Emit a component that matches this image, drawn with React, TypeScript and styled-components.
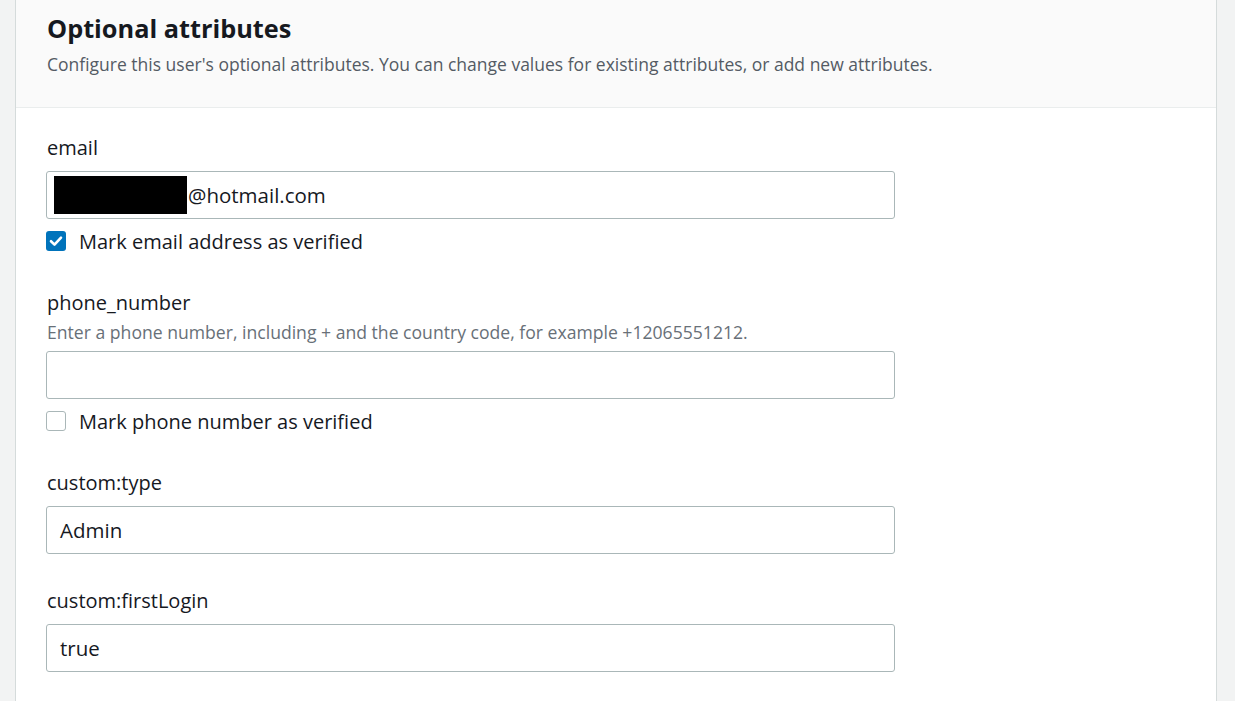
import React from "react";
import styled, { createGlobalStyle } from "styled-components";

const Global = createGlobalStyle`
  html, body { margin: 0; padding: 0; background: #f2f3f3; }
  body { font-family: "Open Sans", "Noto Sans", Arial, sans-serif; color: #16191f; }
`;

const Page = styled.div`
  height: 701px;
  overflow: hidden;
  padding-left: 15px;
  padding-right: 18px;
  background: #f2f3f3;
`;

const Container = styled.section`
  background: #ffffff;
  border-left: 1px solid #d5dbdb;
  border-right: 1px solid #d5dbdb;
  min-height: 701px;
`;

const Header = styled.header`
  background: #fafafa;
  border-bottom: 1px solid #eaeded;
  padding: 10px 31px 32px;
`;

const Title = styled.h2`
  margin: 0;
  font-size: 25.3px;
  line-height: 36px;
  font-weight: 700;
  color: #16191f;
`;

const Description = styled.p`
  margin: 7px 0 0;
  font-size: 17.5px;
  line-height: 22px;
  color: #545b64;
`;

const Body = styled.div`
  padding: 27px 30px 0;
  display: flex;
  flex-direction: column;
  gap: 34px;
`;

const Field = styled.div`
  display: flex;
  flex-direction: column;
  width: 849px;
`;

const Label = styled.label`
  padding-left: 1px;
  font-size: 20px;
  line-height: 26px;
  color: #16191f;
`;

const Hint = styled.div`
  padding-left: 1px;
  font-size: 17.6px;
  line-height: 22px;
  color: #687078;
  margin-top: 5px;
`;

const Input = styled.div<{ $gap: number }>`
  margin-top: ${(p) => p.$gap}px;
  height: 48px;
  box-sizing: border-box;
  border: 1px solid #aab7b8;
  border-radius: 3px;
  background: #fff;
  padding: 0 13px;
  display: flex;
  align-items: center;
  font-size: 20.5px;
  color: #16191f;
`;

const Redaction = styled.span`
  display: inline-block;
  width: 133px;
  height: 38px;
  background: #000;
  margin-left: -6px;
  margin-right: 1px;
`;

const CheckRow = styled.label`
  margin-top: 7px;
  height: 30px;
  display: flex;
  align-items: center;
  gap: 13px;
  font-size: 20px;
  color: #16191f;
`;

const Box = styled.span<{ $checked: boolean }>`
  width: 20px;
  height: 20px;
  box-sizing: border-box;
  border-radius: 3px;
  border: ${(p) => (p.$checked ? "none" : "1.5px solid #aab7b8")};
  background: ${(p) => (p.$checked ? "#0073bb" : "#fff")};
  display: flex;
  align-items: center;
  justify-content: center;
  flex: none;
`;

const Check = ({ checked }: { checked: boolean }) => (
  <Box $checked={checked}>
    {checked && (
      <svg width="20" height="20" viewBox="0 0 20 20">
        <path d="M5 10.2 L8.5 13.6 L15 6.6" fill="none" stroke="#fff" strokeWidth="2.6" strokeLinecap="round" strokeLinejoin="round" />
      </svg>
    )}
  </Box>
);

export default function App() {
  return (
    <>
      <Global />
      <Page>
        <Container>
          <Header>
            <Title>Optional attributes</Title>
            <Description>
              Configure this user's optional attributes. You can change values for existing attributes, or add new attributes.
            </Description>
          </Header>
          <Body>
            <Field>
              <Label>email</Label>
              <Input $gap={10}>
                <Redaction />
                @hotmail.com
              </Input>
              <CheckRow>
                <Check checked />
                Mark email address as verified
              </CheckRow>
            </Field>
            <Field>
              <Label>phone_number</Label>
              <Hint>Enter a phone number, including + and the country code, for example +12065551212.</Hint>
              <Input $gap={8} />
              <CheckRow>
                <Check checked={false} />
                Mark phone number as verified
              </CheckRow>
            </Field>
            <Field>
              <Label>custom:type</Label>
              <Input $gap={10}>Admin</Input>
            </Field>
            <Field>
              <Label>custom:firstLogin</Label>
              <Input $gap={10}>true</Input>
            </Field>
          </Body>
        </Container>
      </Page>
    </>
  );
}
